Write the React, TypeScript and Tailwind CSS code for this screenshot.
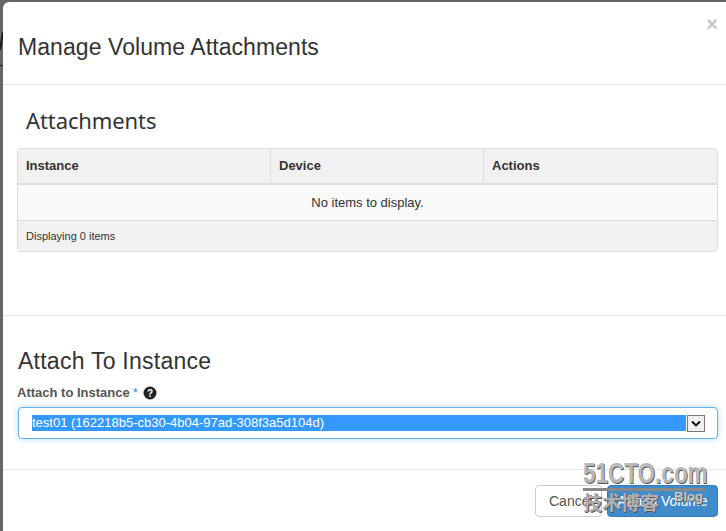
export default function App() {
  return (
    <div className="relative h-[531px] w-[726px] overflow-hidden bg-[#666666] font-['Liberation_Sans',sans-serif] text-[#333333]">
      <svg className="absolute left-0 top-[32px]" width="3" height="20" viewBox="0 0 3 20" aria-hidden="true">
        <path d="M3 0 L0 18" fill="none" stroke="#1c1c1c" strokeWidth="2" />
      </svg>
      <div className="absolute left-0 top-[65px] h-px w-[3px] bg-[#222222]" />
      <div className="relative ml-[3px] mt-[2px] h-[529px] w-[723px] rounded-tl-[6px] bg-white">
        <div className="flex h-[83px] items-start border-b border-[#e5e5e5] pl-[15px] pr-[8px]">
          <h3 className="mt-[29px] flex-1 text-[23px] leading-[33px] tracking-[0.07px]">Manage Volume Attachments</h3>
          <span className="mt-[10px] text-[20px] font-bold leading-[24px] text-[#c8c8c8]">×</span>
        </div>
        <div className="h-[231px] border-b border-[#e8e8e8] pl-[14px] pr-[8px] pt-[20px]">
          <h3 className="ml-[9px] font-['Noto_Sans',sans-serif] text-[22px] leading-[30px] -tracking-[0.1px]">Attachments</h3>
          <div className="mt-[13px] overflow-hidden rounded-[4px] border border-[#dddddd] text-[13px]">
            <div className="grid h-[36px] grid-cols-[253px_213px_1fr] border-b-[2px] border-[#dddddd] bg-[#f1f1f1] font-bold">
              <div className="flex items-center border-r border-[#dddddd] pl-[8px]">Instance</div>
              <div className="flex items-center border-r border-[#dddddd] pl-[8px]">Device</div>
              <div className="flex items-center pl-[8px]">Actions</div>
            </div>
            <div className="flex h-[36px] items-center justify-center border-b border-[#dddddd] bg-[#f9f9f9]">No items to display.</div>
            <div className="flex h-[30px] items-center bg-[#f1f1f1] pl-[8px] text-[11px]">Displaying 0 items</div>
          </div>
        </div>
        <div className="h-[154px] border-b border-[#e5e5e5] pl-[15px] pr-[8px] pt-[29px]">
          <h3 className="text-[23px] leading-[33px] tracking-[0.25px]">Attach To Instance</h3>
          <div className="-ml-[1px] mt-[5px] flex h-[20px] items-center text-[13px] font-bold text-[#555555]">
            Attach to Instance <span className="ml-[3px] font-normal text-[#428bca]">*</span>
            <svg className="ml-[5px] -mt-[1px]" width="14" height="14" viewBox="0 0 14 14" aria-hidden="true">
              <circle cx="7" cy="7" r="6.5" fill="#222222" />
              <text x="7" y="10.5" textAnchor="middle" fontSize="10" fontWeight="700" fill="#ffffff" fontFamily="Liberation Sans">?</text>
            </svg>
          </div>
          <div className="mt-[4px] flex h-[32px] w-[700px] items-center rounded-[4px] border border-[#66afe9] pl-[13px] pr-[12px] shadow-[0_0_6px_rgba(102,175,233,0.5)]">
            <div className="flex h-[16px] flex-1 items-center bg-[#3399ff] text-[13px] text-white">test01 (162218b5-cb30-4b04-97ad-308f3a5d104d)</div>
            <div className="ml-[1px] flex h-[17px] w-[18px] items-center justify-center border border-[#777777] bg-[#f0f0f0]">
              <svg width="10" height="7" viewBox="0 0 10 7" aria-hidden="true">
                <path d="M1 1.5 L5 5.5 L9 1.5" fill="none" stroke="#000000" strokeWidth="1.8" />
              </svg>
            </div>
          </div>
        </div>
        <div className="flex justify-end pr-[8px] pt-[15px] text-[14px]">
          <button className="h-[32px] w-[67px] rounded-[4px] border border-[#cccccc] bg-white pl-[13px] text-left text-[#555555]">Cancel</button>
          <button className="ml-[5px] h-[32px] w-[111px] rounded-[4px] border border-[#357ebd] bg-[#428bca] text-white">Attach Volume</button>
        </div>
      </div>
      <div className="absolute left-[583px] top-[458px] flex w-[130px] flex-col items-start leading-none [text-shadow:1px_1px_0_#555555]">
        <span className="origin-left scale-x-[0.75] text-[30px] font-bold whitespace-nowrap text-[#b8b8b8]">51CTO.com</span>
        <div className="h-[3px] w-[122px] bg-[#888888]" />
        <div className="relative mt-[1px] flex w-[130px] items-center">
          <span className="font-['Noto_Sans_CJK_SC',sans-serif] text-[19px] font-bold text-[#b0b0b0]">技术博客</span>
          <span className="absolute left-[91px] top-[-2px] text-[13px] font-bold text-[#c8c8c8]">Blog</span>
        </div>
      </div>
    </div>
  );
}
